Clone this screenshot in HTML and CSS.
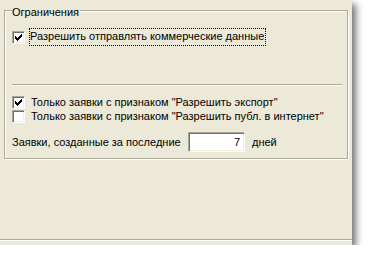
FILE: index.html
```
<!DOCTYPE html>
<html lang="ru">
<head>
<meta charset="utf-8">
<title>Ограничения</title>
<link rel="stylesheet" href="styles.css">
</head>
<body>
<div class="window">
  <div class="group">
    <div class="legend">Ограничения</div>
    <div class="row row-first">
      <span class="cb"><svg width="9" height="9" viewBox="0 0 9 9" shape-rendering="crispEdges"><path d="M1 3h1v3h-1zM2 4h1v3h-1zM3 5h1v3h-1zM4 4h1v3h-1zM5 3h1v3h-1zM6 2h1v3h-1zM7 1h1v3h-1z" fill="#000"/></svg></span>
      <span class="label focus">Разрешить отправлять коммерческие данные</span>
    </div>
    <div class="sep"></div>
    <div class="row row-small row-gap">
      <span class="cb"><svg width="9" height="9" viewBox="0 0 9 9" shape-rendering="crispEdges"><path d="M1 3h1v3h-1zM2 4h1v3h-1zM3 5h1v3h-1zM4 4h1v3h-1zM5 3h1v3h-1zM6 2h1v3h-1zM7 1h1v3h-1z" fill="#000"/></svg></span>
      <span class="label">Только заявки с признаком "Разрешить экспорт"</span>
    </div>
    <div class="row row-small">
      <span class="cb"></span>
      <span class="label">Только заявки с признаком "Разрешить публ. в интернет"</span>
    </div>
    <div class="row row-days">
      <span class="days-label">Заявки, созданные за последние</span>
      <span class="field">7</span>
      <span class="unit">дней</span>
    </div>
  </div>
  <div class="bottom-sep"></div>
</div>
</body>
</html>
```
FILE: styles.css
```
html, body {
  margin: 0;
  padding: 0;
  background: #ffffff;
}
body {
  font-family: "Liberation Sans", Arial, sans-serif;
  font-size: 11px;
  line-height: 13px;
  color: #000;
}
.window {
  width: 352px;
  height: 245px;
  background: #ECE9D8;
  box-shadow: 4px 4px 7px rgba(0, 0, 0, 0.55);
  padding-top: 10px;
  box-sizing: border-box;
  display: flex;
  flex-direction: column;
  overflow: hidden;
}
.group {
  flex: none;
  margin-left: 4px;
  width: 344px;
  height: 149px;
  box-sizing: border-box;
  border: 1px solid #ACA899;
  box-shadow: 1px 1px 0 #ffffff, inset 1px 1px 0 #ffffff;
  padding: 0 5px 0 7px;
}
.legend {
  margin-top: -5px;
  height: 13px;
  line-height: 13px;
  width: fit-content;
  background: #ECE9D8;
  padding-right: 1px;
}
.row {
  display: flex;
  align-items: flex-start;
}
.row-first {
  margin-top: 9px;
  height: 18px;
}
.row-first .cb {
  margin-top: 3px;
}
.cb {
  width: 13px;
  height: 13px;
  box-sizing: border-box;
  flex: none;
  background: #ffffff;
  border-style: solid;
  border-width: 1px;
  border-color: #ACA899 #ffffff #ffffff #ACA899;
  box-shadow: inset 1px 1px 0 #716F64, inset -1px -1px 0 #F1EFE2;
  display: flex;
  align-items: center;
  justify-content: center;
}
.cb svg {
  display: block;
}
.label {
  margin-left: 5px;
  white-space: nowrap;
}
.focus {
  margin-left: 4px;
  height: 18px;
  box-sizing: border-box;
  border: 1px dotted #000;
  line-height: 15px;
  padding: 0 1px 0 0;
}
.sep {
  margin-top: 38px;
  height: 0;
  border-top: 1px solid #ACA899;
  border-bottom: 1px solid #ffffff;
}
.row-small {
  height: 14px;
  line-height: 13px;
}
.row-small .label {
  margin-left: 6px;
}
.row-gap {
  margin-top: 10px;
}
.row-days {
  margin-top: 8px;
  height: 20px;
  align-items: center;
}
.days-label {
  width: 176px;
  flex: none;
  white-space: nowrap;
}
.field {
  flex: none;
  width: 57px;
  height: 20px;
  box-sizing: border-box;
  background: #ffffff;
  border-style: solid;
  border-width: 1px;
  border-color: #ACA899 #ffffff #ffffff #ACA899;
  box-shadow: inset 1px 1px 0 #716F64, inset -1px -1px 0 #F1EFE2;
  text-align: right;
  padding-right: 4px;
  line-height: 18px;
}
.unit {
  margin-left: 7px;
}
.bottom-sep {
  flex: none;
  margin-top: auto;
  margin-bottom: 4px;
  height: 0;
  border-top: 1px solid #ACA899;
  border-bottom: 1px solid #ffffff;
}
```
